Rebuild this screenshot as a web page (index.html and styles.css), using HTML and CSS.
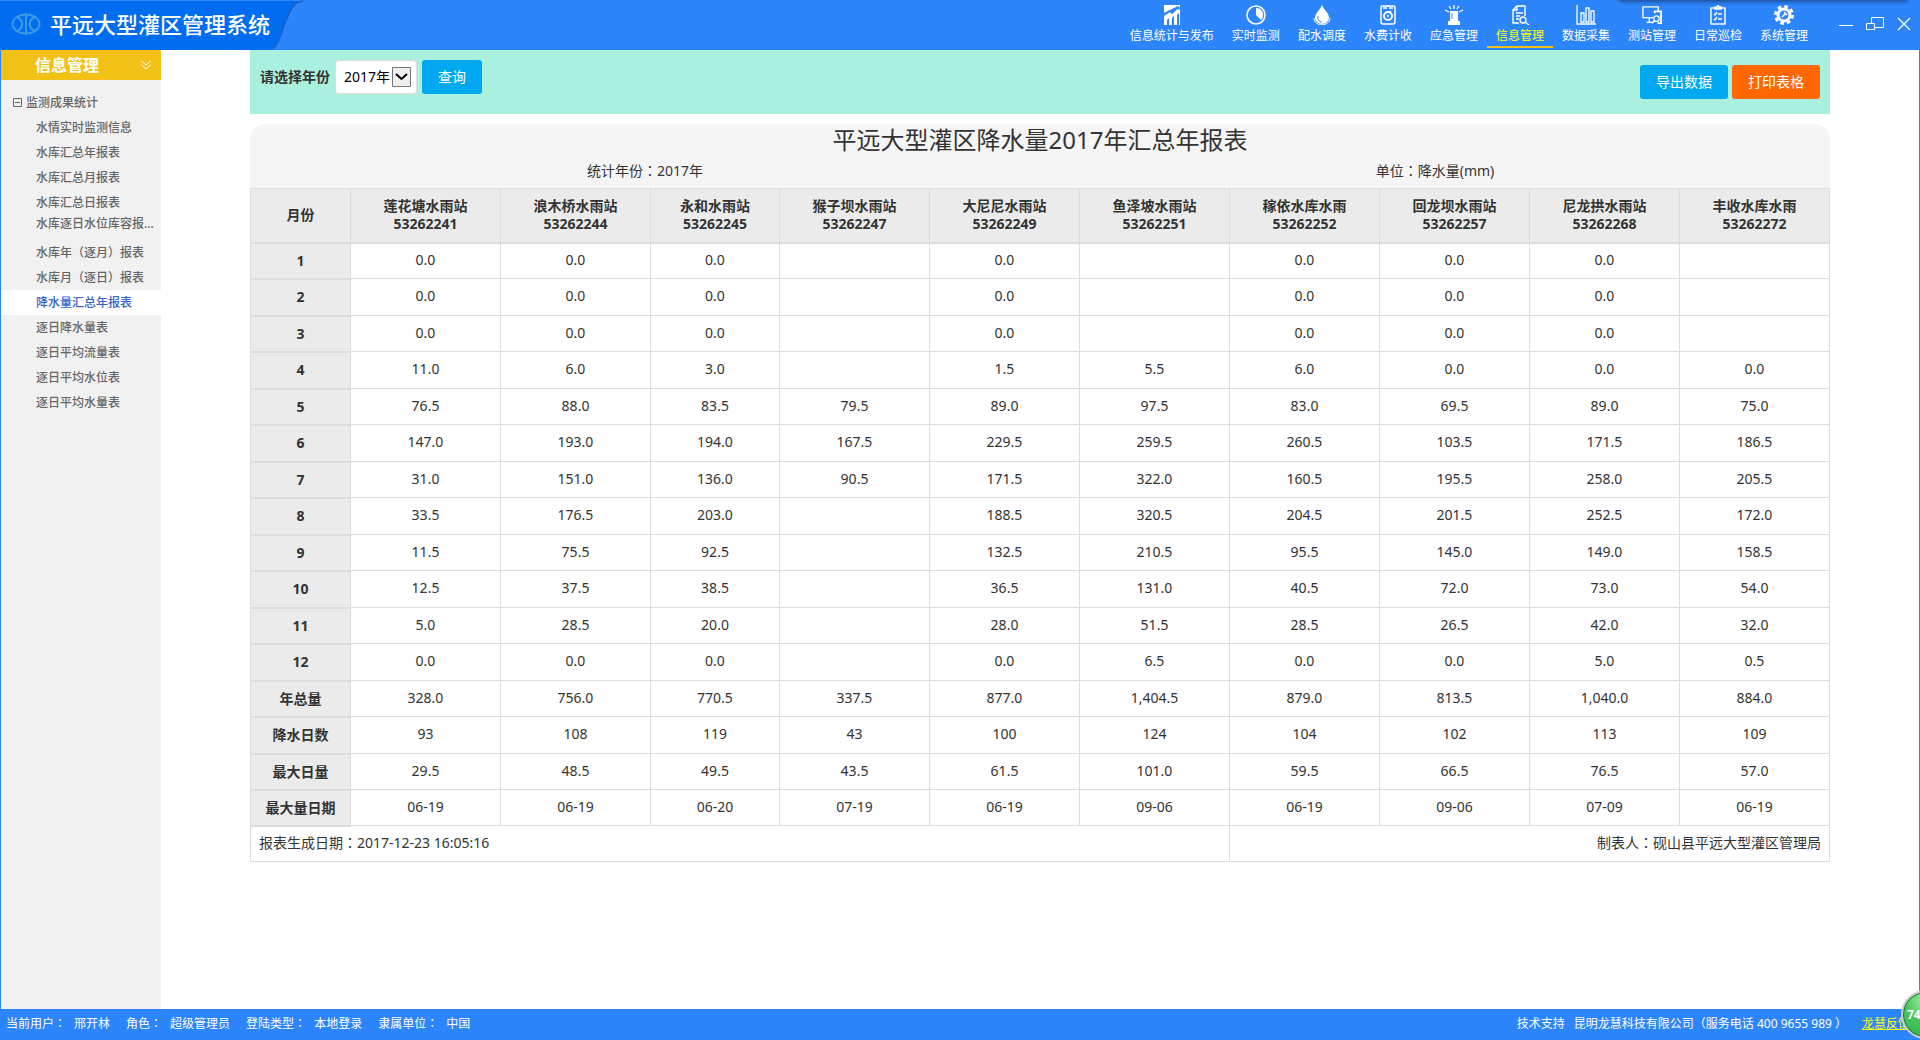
FILE: index.html
```html
<!DOCTYPE html>
<html lang="zh-CN">
<head>
<meta charset="utf-8">
<title>平远大型灌区管理系统</title>
<link rel="stylesheet" href="styles.css">
</head>
<body>
<div class="app">
  <header class="topbar">
    <div class="brand">
      <svg class="brand-bg" viewBox="0 0 304 50" preserveAspectRatio="none" aria-hidden="true"><path d="M0 1H303C292 2 289 14 284 26C280 38 277 48 270 50H0Z" fill="#006df1"/><path d="M303 1C292 2 289 14 284 26C280 38 277 48 270 50" fill="none" stroke="#1c62c4" stroke-width="1.5"/></svg>
      <svg class="brand-logo" viewBox="0 0 30 24" fill="none" stroke="#3d9be0" stroke-width="2" aria-hidden="true"><ellipse cx="15" cy="12" rx="13.5" ry="9.5"/><path d="M15 1V23M6 5C13 8 13 16 6 19M24 5C17 8 17 16 24 19"/></svg>
      <h1 class="brand-name">平远大型灌区管理系统</h1>
    </div>
    <nav class="nav">
      <a class="nav-item" href="#"><svg class="nav-icon" viewBox="0 0 20 20"><path d="M2 0H18V20H17V8L15 10V20H12V11L10 13V20H7V13L5 15V20H2V11L8 7L10 9L17 2H14L2 8Z" fill="#fff"/><path d="M2 10L7 6L10 8L17 2M14 2H17V5" fill="none" stroke="#2d85fc" stroke-width="1.2"/><path d="M2 16L4 15V20H2Z" fill="#fff"/></svg>信息统计与发布</a>
      <a class="nav-item" href="#"><svg class="nav-icon" viewBox="0 0 20 20"><circle cx="10" cy="10" r="9" fill="none" stroke="#fff" stroke-width="1.6"/><path d="M10 3A7 7 0 0 1 15 15L10 10Z" fill="#fff"/></svg>实时监测</a>
      <a class="nav-item" href="#"><svg class="nav-icon" viewBox="0 0 20 20"><path d="M10 0C12 5 17 8 17 13A7 6 0 0 1 3 13C3 8 8 5 10 0Z" fill="#fff"/><path d="M6 11C5 14 7 17 10 17" fill="none" stroke="#2d85fc"/><path d="M2 13C2 22 18 22 18 13" fill="none" stroke="#fff"/></svg>配水调度</a>
      <a class="nav-item" href="#"><svg class="nav-icon" viewBox="0 0 20 20" fill="none" stroke="#fff" stroke-width="1.5"><rect x="3" y="1" width="14" height="18" rx="2"/><path d="M5 3H9M11 3H15M9 1H11M13 6L11 8"/><circle cx="10" cy="11" r="4" stroke-width="2"/><path d="M9 11H11"/></svg>水费计收</a>
      <a class="nav-item" href="#"><svg class="nav-icon" viewBox="0 0 20 20"><path d="M6 6H14V16H16V20H4V16H6Z" fill="#fff"/><path d="M10 0V4M5 1L7 4M15 1L13 4M1 5L5 7M19 5L15 7" stroke="#fff" stroke-width="1.3"/><path d="M8 8V14" stroke="#2d85fc"/></svg>应急管理</a>
      <a class="nav-item nav-item-active" href="#"><svg class="nav-icon" viewBox="0 0 20 20" fill="none" stroke="#fff" stroke-width="1.4"><path d="M9 18H3V5L7 1H15V11M3 5H7V1M6 8H13M6 11H10M6 14H9"/><circle cx="13" cy="15" r="3"/><path d="M15 17L19 20"/></svg>信息管理</a>
      <a class="nav-item" href="#"><svg class="nav-icon" viewBox="0 0 20 20" fill="none" stroke="#fff" stroke-width="1.3"><path d="M1 0V19H20M5 17V8H8V17ZM10 17V3H13V17ZM15 17V6H18V17Z"/></svg>数据采集</a>
      <a class="nav-item" href="#"><svg class="nav-icon" viewBox="0 0 22 20" fill="none" stroke="#fff" stroke-width="1.4"><path d="M12 13H1V1H18V5M8 13V18M5 18H12"/><path d="M14 8V6H21V19H17" stroke-width="2"/><circle cx="16" cy="14" r="3"/><path d="M14 16L11 19"/></svg>测站管理</a>
      <a class="nav-item" href="#"><svg class="nav-icon" viewBox="0 0 20 20" fill="none" stroke="#fff" stroke-width="1.4"><rect x="3" y="3" width="14" height="16"/><path d="M7 4V2H9L10 0L11 2H13V4ZM6 9L7 10L9 7M6 14L7 15L9 12M10 9H14M10 14H14"/></svg>日常巡检</a>
      <a class="nav-item" href="#"><svg class="nav-icon" viewBox="0 0 20 20" fill="none" stroke="#fff"><circle cx="10" cy="10" r="6" stroke-width="3"/><circle cx="10" cy="10" r="8.5" stroke-width="3" stroke-dasharray="3.6 3.08"/><path d="M8 12L12 8M10 7L13 10" stroke-width="1.6"/></svg>系统管理</a>
    </nav>
    <div class="window-controls">
      <button class="window-button" type="button" aria-label="最小化"><svg width="14" height="14" viewBox="0 0 14 14"><path d="M0 8.500H14" stroke="#fff"/></svg></button>
      <button class="window-button" type="button" aria-label="还原"><svg width="18" height="14" viewBox="0 0 18 14" fill="none" stroke="#fff"><path d="M5.500 6V.5H17.500V10.500H9M.5 6.500H8.500V12.500H.5Z"/></svg></button>
      <button class="window-button" type="button" aria-label="关闭"><svg width="14" height="14" viewBox="0 0 14 14"><path d="M1 1L13 13M13 1L1 13" stroke="#fff" stroke-width="1.3"/></svg></button>
    </div>
    <div class="top-shade"></div>
  </header>

  <div class="body">
    <aside class="sidebar">
      <h2 class="sidebar-title"><span>信息管理</span><svg width="10" height="10" viewBox="0 0 10 10" fill="none" stroke="#fff" aria-hidden="true"><path d="M.5 1L5 5L9.500 1M.5 5L5 9L9.500 5"/></svg></h2>
      <div class="tree">
        <div class="tree-group"><svg width="9" height="9" viewBox="0 0 9 9" fill="none" stroke="#666" aria-hidden="true"><path d="M.5.5H8.500V8.500H.5ZM2 4.500H7"/></svg>监测成果统计</div>
        <a class="tree-item" href="#">水情实时监测信息</a>
        <a class="tree-item" href="#">水库汇总年报表</a>
        <a class="tree-item" href="#">水库汇总月报表</a>
        <a class="tree-item" href="#">水库汇总日报表</a>
        <a class="tree-item tree-item-short" href="#">水库逐日水位库容报...</a>
        <a class="tree-item" href="#">水库年<i class="punct" lang="zh-TW">（</i>逐月<i class="punct" lang="zh-TW">）</i>报表</a>
        <a class="tree-item" href="#">水库月<i class="punct" lang="zh-TW">（</i>逐日<i class="punct" lang="zh-TW">）</i>报表</a>
        <a class="tree-item tree-item-active" href="#">降水量汇总年报表</a>
        <a class="tree-item" href="#">逐日降水量表</a>
        <a class="tree-item" href="#">逐日平均流量表</a>
        <a class="tree-item" href="#">逐日平均水位表</a>
        <a class="tree-item" href="#">逐日平均水量表</a>
      </div>
    </aside>

    <main class="content">
      <form class="filter">
        <label class="filter-label" for="year">请选择年份</label>
        <div class="select-box">
          <select id="year"><option>2017年</option></select>
          <svg class="select-arrow" width="19" height="20" viewBox="0 0 19 20" aria-hidden="true"><path d="M.5.5H18.500V19.500H.5Z" fill="#eee" stroke="#777"/><path d="M4 7L9.500 12L15 7" fill="none" stroke="#000" stroke-width="2"/></svg>
        </div>
        <button class="button" type="button">查询</button>
        <div class="filter-actions">
          <button class="button" type="button">导出数据</button>
          <button class="button button-orange" type="button">打印表格</button>
        </div>
      </form>

      <section class="report">
        <div class="report-head">
          <h2 class="report-title">平远大型灌区降水量2017年汇总年报表</h2>
          <div class="report-meta"><span>统计年份<i class="punct" lang="zh-TW">：</i>2017年</span><span>单位<i class="punct" lang="zh-TW">：</i>降水量(mm)</span></div>
        </div>
        <table class="grid">
          <colgroup><col class="col-month"><col class="col-station"><col class="col-station"><col><col class="col-station" span="7"></colgroup>
          <thead>
            <tr><th>月份<th>莲花塘水雨站<br>53262241<th>浪木桥水雨站<br>53262244<th>永和水雨站<br>53262245<th>猴子坝水雨站<br>53262247<th>大尼尼水雨站<br>53262249<th>鱼泽坡水雨站<br>53262251<th>稼依水库水雨<br>53262252<th>回龙坝水雨站<br>53262257<th>尼龙拱水雨站<br>53262268<th>丰收水库水雨<br>53262272
          </thead>
          <tbody>
            <tr><th>1<td>0.0<td>0.0<td>0.0<td><td>0.0<td><td>0.0<td>0.0<td>0.0<td>
            <tr><th>2<td>0.0<td>0.0<td>0.0<td><td>0.0<td><td>0.0<td>0.0<td>0.0<td>
            <tr><th>3<td>0.0<td>0.0<td>0.0<td><td>0.0<td><td>0.0<td>0.0<td>0.0<td>
            <tr><th>4<td>11.0<td>6.0<td>3.0<td><td>1.5<td>5.5<td>6.0<td>0.0<td>0.0<td>0.0
            <tr><th>5<td>76.5<td>88.0<td>83.5<td>79.5<td>89.0<td>97.5<td>83.0<td>69.5<td>89.0<td>75.0
            <tr><th>6<td>147.0<td>193.0<td>194.0<td>167.5<td>229.5<td>259.5<td>260.5<td>103.5<td>171.5<td>186.5
            <tr><th>7<td>31.0<td>151.0<td>136.0<td>90.5<td>171.5<td>322.0<td>160.5<td>195.5<td>258.0<td>205.5
            <tr><th>8<td>33.5<td>176.5<td>203.0<td><td>188.5<td>320.5<td>204.5<td>201.5<td>252.5<td>172.0
            <tr><th>9<td>11.5<td>75.5<td>92.5<td><td>132.5<td>210.5<td>95.5<td>145.0<td>149.0<td>158.5
            <tr><th>10<td>12.5<td>37.5<td>38.5<td><td>36.5<td>131.0<td>40.5<td>72.0<td>73.0<td>54.0
            <tr><th>11<td>5.0<td>28.5<td>20.0<td><td>28.0<td>51.5<td>28.5<td>26.5<td>42.0<td>32.0
            <tr><th>12<td>0.0<td>0.0<td>0.0<td><td>0.0<td>6.5<td>0.0<td>0.0<td>5.0<td>0.5
            <tr><th>年总量<td>328.0<td>756.0<td>770.5<td>337.5<td>877.0<td>1,404.5<td>879.0<td>813.5<td>1,040.0<td>884.0
            <tr><th>降水日数<td>93<td>108<td>119<td>43<td>100<td>124<td>104<td>102<td>113<td>109
            <tr><th>最大日量<td>29.5<td>48.5<td>49.5<td>43.5<td>61.5<td>101.0<td>59.5<td>66.5<td>76.5<td>57.0
            <tr><th>最大量日期<td>06-19<td>06-19<td>06-20<td>07-19<td>06-19<td>09-06<td>06-19<td>09-06<td>07-09<td>06-19
          </tbody>
          <tfoot>
            <tr><td class="made-on" colspan="7">报表生成日期<i class="punct" lang="zh-TW">：</i>2017-12-23 16:05:16<td class="made-by" colspan="4">制表人<i class="punct" lang="zh-TW">：</i>砚山县平远大型灌区管理局
          </tfoot>
        </table>
      </section>
    </main>
  </div>

  <footer class="statusbar">
    <dl class="session">
      <div><dt>当前用户<i class="punct" lang="zh-TW">：</i></dt><dd>邢开林</dd></div>
      <div><dt>角色<i class="punct" lang="zh-TW">：</i></dt><dd>超级管理员</dd></div>
      <div><dt>登陆类型<i class="punct" lang="zh-TW">：</i></dt><dd>本地登录</dd></div>
      <div><dt>隶属单位<i class="punct" lang="zh-TW">：</i></dt><dd>中国</dd></div>
    </dl>
    <div class="support"><span>技术支持</span><span>昆明龙慧科技有限公司<i class="punct" lang="zh-TW">（</i>服务电话 400 9655 989 <i class="punct" lang="zh-TW">）</i></span><a class="feedback" href="#">龙慧反馈</a></div>
  </footer>
  <div class="ball">74</div>
</div>
</body>
</html>
```

FILE: styles.css
```css
* { box-sizing: border-box; }

body {
  margin: 0;
  font: 14px/20px "Noto Sans", "Noto Sans CJK SC", sans-serif;
  color: #333;
}

a { color: inherit; text-decoration: none; }
h1, h2, dl, dd { margin: 0; }
button, select { font: inherit; }

/* full-width punctuation centred in its cell; zero leading keeps the line box unchanged */
.punct { font-family: "Noto Sans CJK TC", sans-serif; font-style: normal; line-height: 0; }

.app {
  position: relative;
  display: flex;
  flex-direction: column;
  min-height: 100vh;
  overflow: hidden;
}

/* top bar */
.topbar {
  position: relative;
  display: flex;
  height: 50px;
  background: #2d85fc;
  color: #fff;
}
.brand {
  position: relative;
  display: flex;
  align-items: center;
  width: 304px;
  padding: 0 0 2px 11px;
  gap: 9px;
}
.brand-bg { position: absolute; inset: 0; width: 100%; height: 100%; }
.brand-logo { position: relative; width: 30px; height: 24px; }
.brand-name {
  position: relative;
  font-size: 22px;
  line-height: 46px;
  font-weight: 500;
  white-space: nowrap;
}
.nav { display: flex; margin-left: auto; }
.nav-item {
  display: flex;
  flex-direction: column;
  align-items: center;
  height: 48px;
  padding: 5px 9px 0;
  gap: 2px;
  font-size: 12px;
  line-height: 18px;
  white-space: nowrap;
  border-bottom: 2px solid transparent;
}
.nav-item-active { color: #ff0; border-bottom-color: #f2c118; }
.nav-icon { width: 20px; height: 20px; }
.window-controls { display: flex; align-items: center; gap: 13px; padding: 0 9px 2px 22px; }
.window-button {
  display: flex;
  padding: 0;
  border: 0;
  background: none;
}
.top-shade {
  position: absolute;
  top: -4px;
  right: 14px;
  width: 286px;
  height: 4px;
  box-shadow: 0 0 5px 1px #123a70;
}

/* body */
.body {
  display: flex;
  flex: 1;
  border: solid #2d85fc;
  border-width: 0 1px;
}
.sidebar { flex: none; width: 160px; background: #f1f1f1; }
.sidebar-title {
  display: flex;
  align-items: center;
  justify-content: space-between;
  height: 30px;
  padding: 0 10px 0 34px;
  background: #f2c118;
  color: #fff;
  font-size: 16px;
}
.tree { padding-top: 10px; font-size: 12px; line-height: 25px; font-weight: 500; color: #666; }
.tree-group { display: flex; align-items: center; gap: 4px; padding-left: 12px; }
.tree-item {
  display: block;
  height: 25px;
  padding-left: 35px;
  white-space: nowrap;
}
.tree-item-short { line-height: 18px; }
.tree-item-active { background: #fff; color: #3462cc; }

.content { flex: 1; min-width: 0; padding: 0 89px 32px; }
.filter {
  display: flex;
  align-items: flex-start;
  height: 64px;
  padding: 10px;
  background: #aaf0df;
}
.filter-label { line-height: 34px; font-weight: 600; }
.select-box { position: relative; margin: 0 5px; }
.select-box select {
  display: block;
  appearance: none;
  width: 82px;
  height: 34px;
  padding: 0 0 0 8px;
  border: 1px solid #e5d9dc;
  border-radius: 4px;
  background: #fff;
  color: #000;
}
.select-arrow { position: absolute; top: 7px; right: 6px; pointer-events: none; }
.button {
  height: 34px;
  padding: 0 16px;
  border: 0;
  border-radius: 3px;
  background: #00a9ef;
  color: #fff;
  white-space: nowrap;
}
.button-orange { background: #ff6700; }
.filter-actions { display: flex; gap: 4px; margin: 5px 0 0 auto; }

/* report */
.report { margin-top: 10px; }
.report-head {
  height: 64px;
  background: #f5f5f5;
  border-radius: 15px 15px 0 0;
  text-align: center;
}
.report-title { font-size: 24px; line-height: 32px; font-weight: 400; }
.report-meta { display: grid; grid-template-columns: 1fr 1fr; line-height: 30px; }

.grid { width: 100%; table-layout: fixed; border-collapse: collapse; text-align: center; }
.col-month { width: 100px; }
.col-station { width: 150px; }
.grid th, .grid td { padding: 0; border: 1px solid #ddd; }
.grid td { padding-bottom: 2px; }
.grid th { background: #ebebeb; border-bottom-width: 2px; }
.grid thead th { height: 54px; padding-bottom: 1px; line-height: 18px; }
.grid tbody tr { height: 36px; }
.grid tbody tr:nth-child(even) { height: 37px; }
.grid tbody tr:last-child, .grid tfoot tr { height: 36px; }
.grid .made-on { padding-left: 8px; text-align: left; }
.grid .made-by { padding-right: 8px; text-align: right; }

/* status bar */
.statusbar {
  display: flex;
  justify-content: space-between;
  height: 31px;
  padding-left: 6px;
  background: #2d85fc;
  color: #fff;
  font-size: 12px;
  line-height: 30px;
  white-space: nowrap;
}
.session { display: flex; gap: 16px; }
.session div { display: flex; gap: 8px; }
.support { display: flex; gap: 9px; }
.feedback { width: 58px; margin-left: 6px; color: #ff0; text-decoration: underline; }
.ball {
  position: absolute;
  right: -30px;
  bottom: 1px;
  width: 49px;
  height: 49px;
  padding-left: 4px;
  border: 2px solid #ccc;
  border-radius: 50%;
  background: radial-gradient(circle at 45% 20%, #9be89b, #46c35a 45%, #33b04d);
  box-shadow: inset 0 0 0 1px #177a4a;
  color: #fff;
  font-size: 12px;
  line-height: 45px;
  font-weight: 700;
}
```
